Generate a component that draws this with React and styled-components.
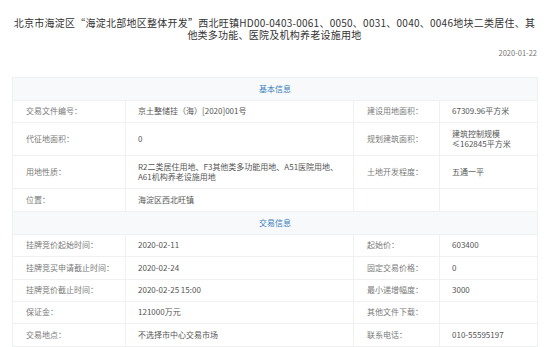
import React from 'react';
import styled, { createGlobalStyle } from 'styled-components';

const GlobalStyle = createGlobalStyle`
  body {
    margin: 0;
    background: #fff;
    font-family: "Noto Sans CJK SC", "Noto Sans", sans-serif;
  }
`;

const Page = styled.div`
  width: 550px;
  height: 347px;
  padding: 17px 0 0 12px;
  box-sizing: border-box;
  overflow: hidden;
`;

const Title = styled.h1`
  width: 525px;
  margin: 0;
  font-size: 10px;
  line-height: 11.5px;
  letter-spacing: 0.25px;
  font-weight: normal;
  color: #333;
  text-align: center;
`;

const DateLine = styled.div`
  width: 525px;
  margin-top: 8px;
  font-size: 7.5px;
  line-height: 10px;
  color: #777;
  text-align: right;
`;

const Table = styled.table`
  width: 525px;
  margin-top: 19px;
  border-collapse: collapse;
  table-layout: fixed;
  font-size: 8px;
  line-height: 10.5px;
`;

const SectionCell = styled.td`
  height: 22px;
  padding: 0;
  background: #f7f9fb;
  border: 1px solid #eef0f2;
  color: #3a7fbf;
  text-align: center;
`;

const Cell = styled.td`
  height: ${(p) => (p.$tall ? '32px' : '21.4px')};
  padding: 0 0 0 ${(p) => (p.$label ? '13px' : '12px')};
  border: 1px solid #eef0f2;
  color: ${(p) => (p.$label ? '#7a7a7a' : '#555')};
  vertical-align: middle;
  word-break: break-all;
`;

const basic = [
  ['交易文件编号：', '京土整储挂（海）[2020]001号', '建设用地面积：', '67309.96平方米'],
  ['代征地面积：', '0', '规划建筑面积：', <>建筑控制规模<br />≤162845平方米</>, true],
  ['用地性质：', <>R2二类居住用地、F3其他类多功能用地、A51医院用地、<br />A61机构养老设施用地</>, '土地开发程度：', '五通一平', true],
  ['位置：', '海淀区西北旺镇', '', ''],
];

const trade = [
  ['挂牌竞价起始时间：', '2020-02-11', '起始价：', '603400'],
  ['挂牌竞买申请截止时间：', '2020-02-24', '固定交易价格：', '0'],
  ['挂牌竞价截止时间：', '2020-02-25 15:00', '最小递增幅度：', '3000'],
  ['保证金：', '121000万元', '其他文件下载：', ''],
  ['交易地点：', '不选择市中心交易市场', '联系电话：', '010-55595197'],
];

const Row = ({ row }) => (
  <tr>
    <Cell $label $tall={row[4]}>{row[0]}</Cell>
    <Cell $tall={row[4]}>{row[1]}</Cell>
    <Cell $label $tall={row[4]}>{row[2]}</Cell>
    <Cell $tall={row[4]}>{row[3]}</Cell>
  </tr>
);

const App = () => (
  <Page>
    <GlobalStyle />
    <Title>
      北京市海淀区“海淀北部地区整体开发”西北旺镇HD00-0403-0061、0050、0031、0040、0046地块二类居住、其
      <br />
      他类多功能、医院及机构养老设施用地
    </Title>
    <DateLine>2020-01-22</DateLine>
    <Table>
      <colgroup>
        <col style={{ width: 113 }} />
        <col style={{ width: 228 }} />
        <col style={{ width: 86 }} />
        <col style={{ width: 98 }} />
      </colgroup>
      <tbody>
        <tr><SectionCell colSpan={4}>基本信息</SectionCell></tr>
        {basic.map((r) => <Row key={r[0]} row={r} />)}
        <tr><SectionCell colSpan={4}>交易信息</SectionCell></tr>
        {trade.map((r) => <Row key={r[0]} row={r} />)}
      </tbody>
    </Table>
  </Page>
);

export default App;
